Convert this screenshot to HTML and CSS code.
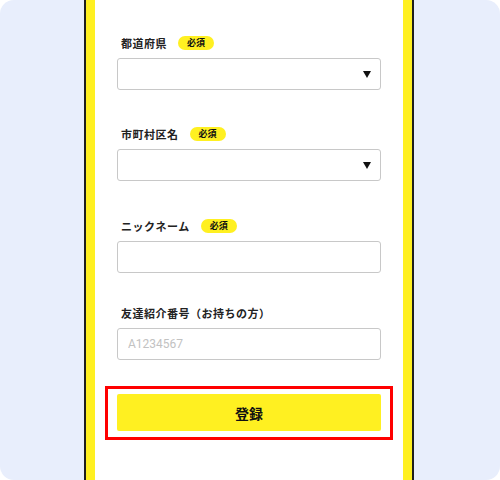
FILE: index.html
```html
<!DOCTYPE html>
<html lang="ja">
<head>
    <meta charset="UTF-8">
    <meta name="viewport" content="width=device-width, initial-scale=1.0">
    <title>会員登録</title>
    <link rel="stylesheet" href="styles.css">
</head>
<body>
    <div class="stage">
        <div class="phone">
            <div class="phone_inner">
                <form class="form">
                    <div class="field">
                        <div class="field_label">都道府県<span class="badge">必須</span></div>
                        <div class="select-wrap">
                            <select class="control"><option></option></select>
                        </div>
                    </div>
                    <div class="field">
                        <div class="field_label">市町村区名<span class="badge">必須</span></div>
                        <div class="select-wrap">
                            <select class="control"><option></option></select>
                        </div>
                    </div>
                    <div class="field">
                        <div class="field_label">ニックネーム<span class="badge">必須</span></div>
                        <input class="control" type="text">
                    </div>
                    <div class="field field-sub">
                        <div class="field_label">友達紹介番号（お持ちの方）</div>
                        <input class="control" type="text" placeholder="A1234567">
                    </div>
                    <div class="highlight">
                        <button type="button" class="submit">登録</button>
                    </div>
                </form>
            </div>
        </div>
    </div>
</body>
</html>
```

FILE: styles.css
```css
* {
    box-sizing: border-box;
    margin: 0;
    padding: 0;
}

body {
    background: #ffffff;
    font-family: 'Noto Sans CJK JP', 'Noto Sans', sans-serif;
    color: #222;
}

.stage {
    width: 500px;
    height: 480px;
    background-color: #e8eefc;
    border-radius: 14px;
    overflow: hidden;
}

.phone {
    width: 330px;
    height: 100%;
    margin-left: 84px;
    border-left: 2px solid #1e1e1e;
    border-right: 2px solid #1e1e1e;
}

.phone_inner {
    height: 100%;
    background: #ffffff;
    border-left: 9px solid #fff021;
    border-right: 9px solid #fff021;
}

.form {
    display: flex;
    flex-direction: column;
    padding-top: 35px;
}

.field {
    padding: 0 22px;
    margin-bottom: 36px;
}

.field:nth-child(2) {
    margin-bottom: 37px;
}

.field-sub {
    margin-top: -4px;
    margin-bottom: 26px;
}

.field_label {
    display: flex;
    align-items: center;
    height: 15px;
    margin-bottom: 8px;
    padding-left: 4px;
    font-size: 11px;
    font-weight: bold;
    letter-spacing: 0.5px;
}

.badge {
    display: inline-flex;
    align-items: center;
    justify-content: center;
    width: 36px;
    height: 14px;
    margin-left: 11px;
    border-radius: 7px;
    background: #fff021;
    font-size: 9px;
    font-weight: bold;
    letter-spacing: 0;
    color: #111;
}

.control {
    display: block;
    width: 100%;
    height: 32px;
    padding: 0 10px;
    border: 1px solid #c8c8c8;
    border-radius: 3px;
    background: #ffffff;
    font-family: Roboto, 'Liberation Sans', sans-serif;
    font-size: 12px;
    color: #222;
    appearance: none;
    -webkit-appearance: none;
    outline: none;
}

.control::placeholder {
    color: #c2c2c2;
}

.select-wrap {
    position: relative;
}

.select-wrap::after {
    content: "";
    position: absolute;
    right: 10px;
    top: 13px;
    width: 0;
    height: 0;
    border-left: 4px solid transparent;
    border-right: 4px solid transparent;
    border-top: 7px solid #111;
    pointer-events: none;
}

.highlight {
    margin: 0 10px;
    padding: 5px 9px 6px;
    border: 3px solid #ff0000;
}

.submit {
    display: block;
    width: 100%;
    height: 37px;
    border: none;
    border-radius: 2px;
    background-color: #fff021;
    font-family: 'Noto Sans CJK JP', sans-serif;
    font-size: 14px;
    font-weight: bold;
    color: #111;
    cursor: pointer;
}
```
